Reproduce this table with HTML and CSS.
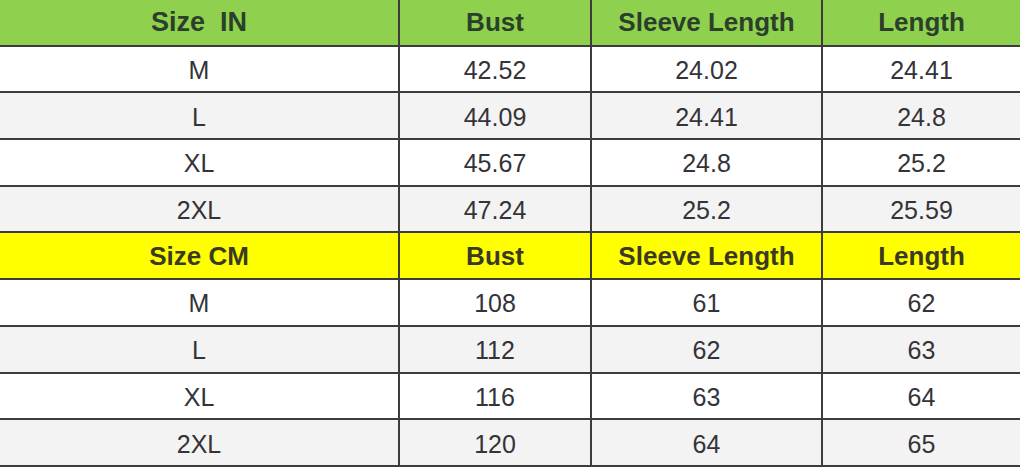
FILE: index.html
```html
<!DOCTYPE html>
<html>
<head>
<meta charset="utf-8">
<link rel="stylesheet" href="styles.css">
</head>
<body>
<table class="size-table">
  <colgroup>
    <col class="c1"><col class="c2"><col class="c3"><col class="c4">
  </colgroup>
  <tbody>
    <tr class="head green"><td class="wide">Size&nbsp; IN</td><td>Bust</td><td>Sleeve Length</td><td>Length</td></tr>
    <tr><td>M</td><td>42.52</td><td>24.02</td><td>24.41</td></tr>
    <tr class="alt"><td>L</td><td>44.09</td><td>24.41</td><td>24.8</td></tr>
    <tr><td>XL</td><td>45.67</td><td>24.8</td><td>25.2</td></tr>
    <tr class="alt"><td>2XL</td><td>47.24</td><td>25.2</td><td>25.59</td></tr>
    <tr class="head yellow"><td>Size CM</td><td>Bust</td><td>Sleeve Length</td><td>Length</td></tr>
    <tr><td>M</td><td>108</td><td>61</td><td>62</td></tr>
    <tr class="alt"><td>L</td><td>112</td><td>62</td><td>63</td></tr>
    <tr><td>XL</td><td>116</td><td>63</td><td>64</td></tr>
    <tr class="alt"><td>2XL</td><td>120</td><td>64</td><td>65</td></tr>
  </tbody>
</table>
</body>
</html>
```
FILE: styles.css
```css
html, body {
  margin: 0;
  padding: 0;
  background: #ffffff;
}
.size-table {
  width: 1020px;
  height: 467px;
  border-collapse: collapse;
  table-layout: fixed;
  font-family: "Liberation Sans", Arial, sans-serif;
}
.c1 { width: 399px; }
.c2 { width: 192px; }
.c3 { width: 231px; }
.c4 { width: 198px; }
.size-table td {
  height: 41.7px;
  padding: 3px 0 0 0;
  text-align: center;
  vertical-align: middle;
  font-size: 25px;
  color: #333338;
  border-bottom: 2px solid #3c3c3c;
  border-left: 2px solid #3c3c3c;
}
.size-table td:first-child {
  border-left: none;
}
.size-table tr.alt td {
  background: #f3f3f3;
}
.size-table tr.head td {
  font-weight: bold;
  font-size: 26px;
  height: 43.7px;
  padding-top: 1px;
}
.size-table tr.green td {
  background: #8fd14f;
  color: #2b3f2b;
}
.size-table tr.green td.wide {
  font-size: 27px;
}
.size-table tr.yellow td {
  background: #ffff00;
  color: #3a3a22;
}
```
